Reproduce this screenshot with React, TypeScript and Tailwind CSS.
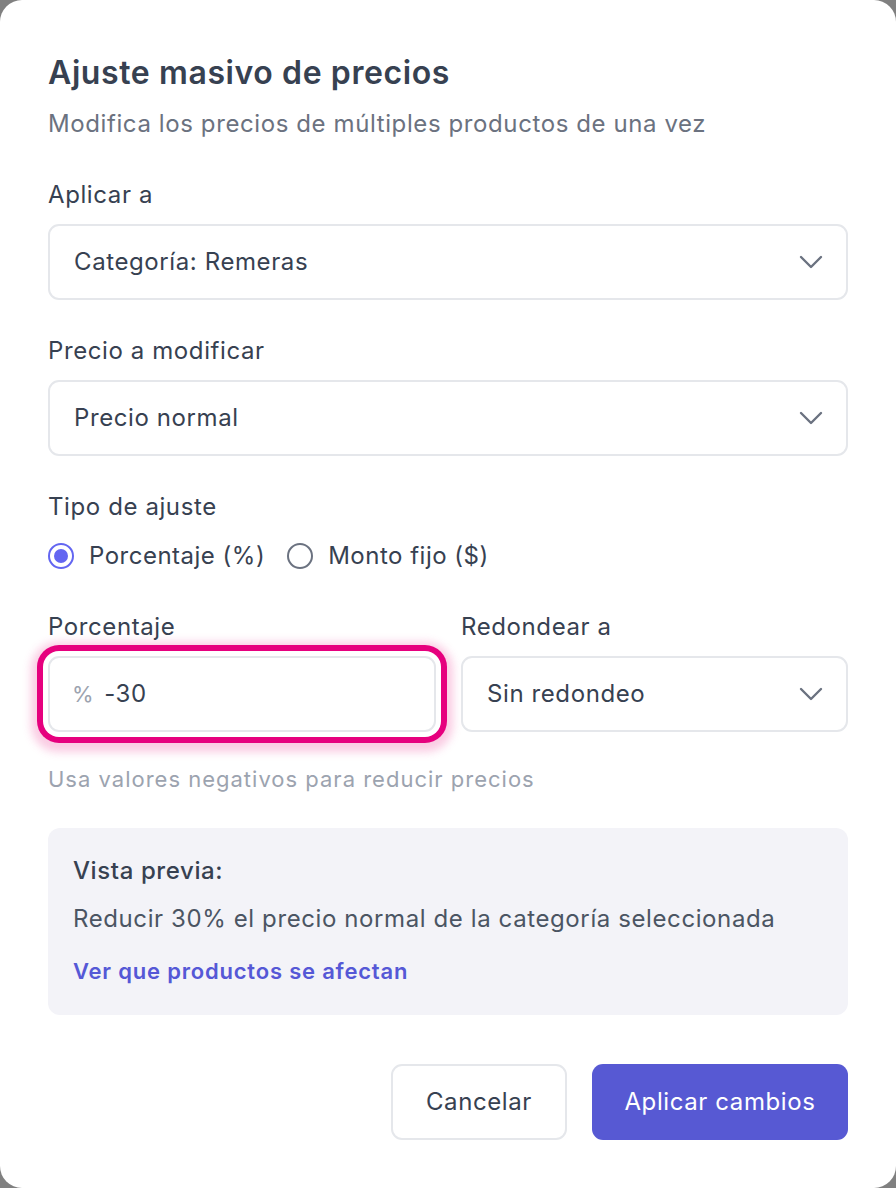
function Label({ children }: { children: React.ReactNode }) {
  return <p className="text-[24px] leading-[32px] text-[#374151]">{children}</p>;
}

function Chevron() {
  return (
    <svg width="24" height="14" viewBox="0 0 24 14" fill="none" className="text-[#6b7280]">
      <polyline points="2,2 12,12 22,2" stroke="currentColor" strokeWidth="2.4" strokeLinecap="round" strokeLinejoin="round" />
    </svg>
  );
}

function Select({ value, className = "" }: { value: string; className?: string }) {
  return (
    <div
      className={`flex h-[76px] items-center justify-between rounded-[11px] border-2 border-[#e5e7eb] bg-white pl-[24px] pr-[23px] ${className}`}
    >
      <span className="text-[24px] text-[#374151]">{value}</span>
      <Chevron />
    </div>
  );
}

function Radio({ checked, label }: { checked: boolean; label: string }) {
  return (
    <div className="flex h-[32px] items-center gap-[15px]">
      {checked ? (
        <span className="flex h-[26px] w-[26px] items-center justify-center rounded-full border-[2.5px] border-[#6366f1]">
          <span className="h-[14px] w-[14px] rounded-full bg-[#6366f1]" />
        </span>
      ) : (
        <span className="h-[26px] w-[26px] rounded-full border-2 border-[#6b7280]" />
      )}
      <span className="text-[24px] tracking-[0.5px] text-[#374151]">{label}</span>
    </div>
  );
}

export default function App() {
  return (
    <div
      className="min-h-[1188px] bg-[#808080] tracking-[0.6px]"
      style={{ fontFamily: "Inter, 'Noto Sans', sans-serif" }}
    >
      <div className="flex h-[1188px] flex-col rounded-[22px] bg-white px-[48px] pt-[53px]">
        <h1 className="text-[32px] font-semibold leading-[40px] text-[#374151]">
          Ajuste masivo de precios
        </h1>
        <p className="mt-[15px] text-[24px] leading-[32px] text-[#6b7280]">
          Modifica los precios de múltiples productos de una vez
        </p>

        <div className="mt-[39px]">
          <Label>Aplicar a</Label>
          <Select value="Categoría: Remeras" className="mt-[13px]" />
        </div>

        <div className="mt-[35px]">
          <Label>Precio a modificar</Label>
          <Select value="Precio normal" className="mt-[13px]" />
        </div>

        <div className="mt-[35px]">
          <Label>Tipo de ajuste</Label>
          <div className="mt-[17px] flex items-center gap-[22px]">
            <Radio checked label="Porcentaje (%)" />
            <Radio checked={false} label="Monto fijo ($)" />
          </div>
        </div>

        <div className="mt-[39px] grid grid-cols-[388px_1fr] gap-[25px]">
          <div>
            <Label>Porcentaje</Label>
            <div className="mt-[13px] flex h-[76px] items-center gap-[10px] rounded-[11px] border-2 border-[#e5e7eb] bg-white pl-[22px] shadow-[0_3px_8px_17px_rgba(236,72,153,0.28)] ring-[6px] ring-[#e6007e] ring-offset-[5px] ring-offset-white">
              <span className="text-[22px] text-[#9ca3af]">%</span>
              <span className="text-[24px] text-[#374151]">-30</span>
            </div>
          </div>
          <div>
            <Label>Redondear a</Label>
            <Select value="Sin redondeo" className="mt-[13px]" />
          </div>
        </div>

        <p className="mt-[32px] text-[22px] leading-[30px] tracking-[1px] text-[#9ca3af]">
          Usa valores negativos para reducir precios
        </p>

        <div className="mt-[34px] h-[187px] rounded-[12px] bg-[#f3f3f8] px-[25px] pt-[27px]">
          <p className="text-[24px] font-medium leading-[32px] text-[#374151]">Vista previa:</p>
          <p className="mt-[16px] text-[24px] leading-[32px] text-[#4b5563]">
            Reducir 30% el precio normal de la categoría seleccionada
          </p>
          <p className="mt-[20px] text-[22px] font-semibold leading-[32px] tracking-[0.8px] text-[#5558d6]">
            Ver que productos se afectan
          </p>
        </div>

        <div className="mt-[49px] flex justify-end gap-[25px]">
          <button className="h-[76px] w-[176px] rounded-[11px] border-2 border-[#e5e7eb] bg-white text-[24px] text-[#374151]">
            Cancelar
          </button>
          <button className="h-[76px] w-[256px] rounded-[11px] bg-[#5759d3] text-[24px] text-white">
            Aplicar cambios
          </button>
        </div>
      </div>
    </div>
  );
}
